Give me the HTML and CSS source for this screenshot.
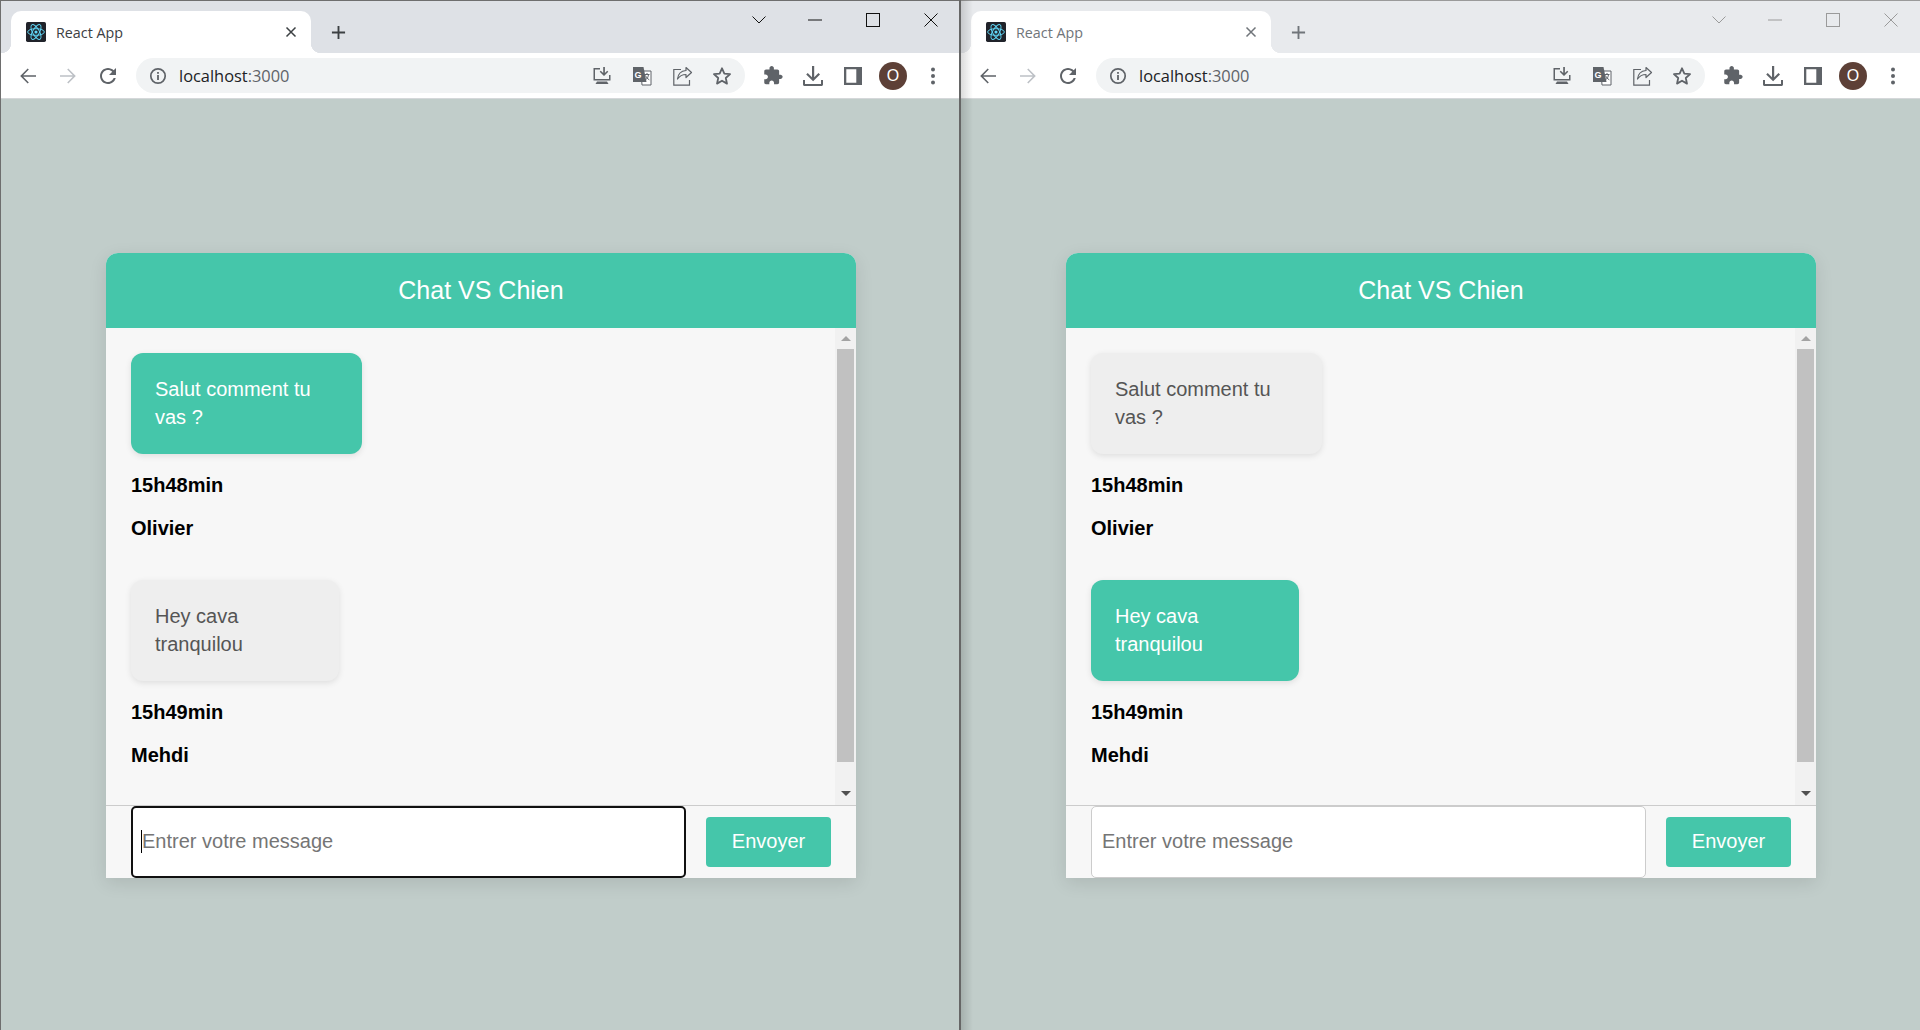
FILE: index.html
```html
<!DOCTYPE html>
<html lang="en">
<head>
    <meta charset="UTF-8">
    <meta name="viewport" content="width=device-width, initial-scale=1.0">
    <title>React App</title>
    <link rel="stylesheet" href="styles.css">
</head>
<body>
    <svg class="icon-defs" xmlns="http://www.w3.org/2000/svg">
        <symbol id="i-react" viewBox="0 0 24 24">
            <rect width="24" height="24" rx="2" fill="#20232a"/>
            <g fill="none" stroke="#61dafb" stroke-width="1.1">
                <ellipse cx="12" cy="12" rx="10" ry="4"/>
                <ellipse cx="12" cy="12" rx="10" ry="4" transform="rotate(60 12 12)"/>
                <ellipse cx="12" cy="12" rx="10" ry="4" transform="rotate(120 12 12)"/>
            </g>
            <circle cx="12" cy="12" r="1.9" fill="#61dafb"/>
        </symbol>
        <symbol id="i-back" viewBox="0 0 24 24">
            <path d="M20 11.2H7.2l5.6-5.6L11.7 4.5 4.2 12l7.5 7.5 1.1-1.1-5.6-5.6H20z"/>
        </symbol>
        <symbol id="i-forward" viewBox="0 0 24 24">
            <path d="M4 11.2h12.8l-5.6-5.6 1.1-1.1 7.5 7.5-7.5 7.5-1.1-1.1 5.6-5.6H4z"/>
        </symbol>
        <symbol id="i-reload" viewBox="0 0 24 24">
            <path d="M17.65 6.35C16.2 4.9 14.21 4 12 4c-4.42 0-7.99 3.58-7.99 8s3.57 8 7.99 8c3.73 0 6.84-2.55 7.73-6h-2.08c-.82 2.33-3.04 4-5.65 4-3.31 0-6-2.69-6-6s2.69-6 6-6c1.66 0 3.14.69 4.22 1.78L13 11h7V4l-2.35 2.35z"/>
        </symbol>
        <symbol id="i-info" viewBox="0 0 24 24">
            <circle cx="12" cy="12" r="7.2" fill="none" stroke="currentColor" stroke-width="1.7"/>
            <rect x="11.1" y="11" width="1.8" height="5"/>
            <rect x="11.1" y="8" width="1.8" height="1.8"/>
        </symbol>
        <symbol id="i-install" viewBox="0 0 24 24">
            <path d="M3.5 4H10v1.5H5v9.5h14V11h1.5v5.5h-17z"/>
            <path d="M13.2 3h1.7v6l2.3-2.3 1.1 1.1L14 12 9.7 7.8l1.1-1.1 2.4 2.3z"/>
            <path d="M7 17.5h10l1.5 2.5H5.5z"/>
        </symbol>
        <symbol id="i-translate" viewBox="0 0 24 24">
            <path d="M11 7h10v14h-9z" fill="#fff" stroke="currentColor" stroke-width="1"/>
            <path d="M3 3h10.500l3 15H3z"/>
            <text x="4.500" y="14" class="translate-g">G</text>
            <path d="M14.500 10.500h5M17 9v1.500M15.500 16c1.800-1.300 2.700-3 3-5.500M15.500 11.500c.8 1.800 2 3.300 3.800 4.300" fill="none" stroke="currentColor" stroke-width="1"/>
        </symbol>
        <symbol id="i-share" viewBox="0 0 24 24">
            <path d="M11 5.500H3.800v15.700h15.700V16" fill="none" stroke="currentColor" stroke-width="1.200"/>
            <path d="M16 3.500l5.500 5-5.500 5v-3c-4 0-6.500 1.500-8.500 4.500.5-5 3.500-8 8.500-8.500z" fill="none" stroke="currentColor" stroke-width="1.200" stroke-linejoin="round"/>
        </symbol>
        <symbol id="i-star" viewBox="0 0 24 24">
            <path d="M12 4.300l2.350 5.250 5.700.6-4.270 3.850 1.200 5.620L12 16.750 7.020 19.620l1.200-5.620L3.950 10.150l5.700-.6z" fill="none" stroke="currentColor" stroke-width="1.800" stroke-linejoin="round"/>
        </symbol>
        <symbol id="i-extension" viewBox="0 0 24 24">
            <path d="M20.500 11H19V7c0-1.100-.9-2-2-2h-4V3.500C13 2.120 11.880 1 10.500 1S8 2.120 8 3.500V5H4c-1.100 0-1.990.9-1.990 2v3.800H3.500c1.490 0 2.700 1.210 2.700 2.700s-1.210 2.700-2.700 2.700H2V20c0 1.100.9 2 2 2h3.800v-1.500c0-1.490 1.210-2.700 2.700-2.700 1.490 0 2.700 1.210 2.700 2.700V22H17c1.100 0 2-.9 2-2v-4h1.500c1.380 0 2.500-1.120 2.500-2.500S21.880 11 20.500 11z"/>
        </symbol>
        <symbol id="i-download" viewBox="0 0 24 24">
            <path d="M11 2h2.200v11.200l4.300-4.300 1.500 1.500-6.900 6.900-6.900-6.900 1.500-1.500 4.300 4.300z"/>
            <path d="M2 16h2v4h16v-4h2v4.500c0 .8-.7 1.500-1.500 1.500h-17c-.8 0-1.500-.7-1.500-1.500z"/>
        </symbol>
        <symbol id="i-panel" viewBox="0 0 24 24">
            <path fill-rule="evenodd" d="M3 3h18v18H3zM5.300 5.200v13.600h10V5.200z"/>
        </symbol>
        <symbol id="i-dots" viewBox="0 0 24 24">
            <circle cx="12" cy="5.500" r="2"/>
            <circle cx="12" cy="12" r="2"/>
            <circle cx="12" cy="18.500" r="2"/>
        </symbol>
        <symbol id="i-tab-close" viewBox="0 0 12 12">
            <path d="M1.500 1.500l9 9M10.500 1.500l-9 9" fill="none" stroke="currentColor" stroke-width="1.500"/>
        </symbol>
        <symbol id="i-plus" viewBox="0 0 16 16">
            <path d="M8 1v14M1 8h14" fill="none" stroke="currentColor" stroke-width="2"/>
        </symbol>
        <symbol id="i-chevron" viewBox="0 0 14 8">
            <path d="M.5 .5L7 7l6.500-6.500" fill="none" stroke="currentColor" stroke-width="1"/>
        </symbol>
        <symbol id="i-min" viewBox="0 0 14 14">
            <path d="M0 7h14" fill="none" stroke="currentColor" stroke-width="1"/>
        </symbol>
        <symbol id="i-max" viewBox="0 0 14 14">
            <rect x=".5" y=".5" width="13" height="13" fill="none" stroke="currentColor" stroke-width="1"/>
        </symbol>
        <symbol id="i-win-close" viewBox="0 0 14 14">
            <path d="M.5 .5l13 13M13.500 .5l-13 13" fill="none" stroke="currentColor" stroke-width="1"/>
        </symbol>
    </svg>

    <div class="desktop">
        <!-- Olivier's window, focused -->
        <div class="window">
            <div class="tabstrip">
                <div class="tab">
                    <svg class="favicon"><use href="#i-react"/></svg>
                    <span class="tab-title">React App</span>
                    <svg class="tab-close"><use href="#i-tab-close"/></svg>
                </div>
                <svg class="new-tab"><use href="#i-plus"/></svg>
                <div class="win-controls">
                    <svg class="win-chevron"><use href="#i-chevron"/></svg>
                    <svg class="win-icon"><use href="#i-min"/></svg>
                    <svg class="win-icon"><use href="#i-max"/></svg>
                    <svg class="win-icon"><use href="#i-win-close"/></svg>
                </div>
            </div>
            <div class="toolbar">
                <svg class="tool"><use href="#i-back"/></svg>
                <svg class="tool tool-off"><use href="#i-forward"/></svg>
                <svg class="tool"><use href="#i-reload"/></svg>
                <div class="omnibox">
                    <svg class="omni-info"><use href="#i-info"/></svg>
                    <span class="url">localhost<span class="url-port">:3000</span></span>
                    <svg class="tool"><use href="#i-install"/></svg>
                    <svg class="tool"><use href="#i-translate"/></svg>
                    <svg class="tool"><use href="#i-share"/></svg>
                    <svg class="tool"><use href="#i-star"/></svg>
                </div>
                <svg class="tool tool-ext"><use href="#i-extension"/></svg>
                <svg class="tool"><use href="#i-download"/></svg>
                <svg class="tool"><use href="#i-panel"/></svg>
                <div class="avatar-slot"><span class="avatar">O</span></div>
                <svg class="tool"><use href="#i-dots"/></svg>
            </div>
            <main class="page">
                <section class="chat">
                    <header class="chat-header">Chat VS Chien</header>
                    <div class="chat-body">
                        <div class="messages">
                            <div class="message">
                                <div class="bubble bubble-own bubble-salut">Salut comment tu vas ?</div>
                                <p class="meta">15h48min</p>
                                <p class="meta">Olivier</p>
                            </div>
                            <div class="message">
                                <div class="bubble bubble-hey">Hey cava tranquilou</div>
                                <p class="meta">15h49min</p>
                                <p class="meta">Mehdi</p>
                            </div>
                        </div>
                        <div class="scrollbar">
                            <span class="arrow-up"></span>
                            <span class="thumb"></span>
                            <span class="arrow-down"></span>
                        </div>
                    </div>
                    <form class="chat-form">
                        <div class="field">
                            <input class="chat-input chat-input-focus" type="text" placeholder="Entrer votre message">
                            <span class="caret"></span>
                        </div>
                        <button class="send" type="button">Envoyer</button>
                    </form>
                </section>
            </main>
        </div>

        <!-- Mehdi's window, in the background -->
        <div class="window window-inactive">
            <div class="tabstrip">
                <div class="tab">
                    <svg class="favicon"><use href="#i-react"/></svg>
                    <span class="tab-title">React App</span>
                    <svg class="tab-close"><use href="#i-tab-close"/></svg>
                </div>
                <svg class="new-tab"><use href="#i-plus"/></svg>
                <div class="win-controls">
                    <svg class="win-chevron"><use href="#i-chevron"/></svg>
                    <svg class="win-icon"><use href="#i-min"/></svg>
                    <svg class="win-icon"><use href="#i-max"/></svg>
                    <svg class="win-icon"><use href="#i-win-close"/></svg>
                </div>
            </div>
            <div class="toolbar">
                <svg class="tool"><use href="#i-back"/></svg>
                <svg class="tool tool-off"><use href="#i-forward"/></svg>
                <svg class="tool"><use href="#i-reload"/></svg>
                <div class="omnibox">
                    <svg class="omni-info"><use href="#i-info"/></svg>
                    <span class="url">localhost<span class="url-port">:3000</span></span>
                    <svg class="tool"><use href="#i-install"/></svg>
                    <svg class="tool"><use href="#i-translate"/></svg>
                    <svg class="tool"><use href="#i-share"/></svg>
                    <svg class="tool"><use href="#i-star"/></svg>
                </div>
                <svg class="tool tool-ext"><use href="#i-extension"/></svg>
                <svg class="tool"><use href="#i-download"/></svg>
                <svg class="tool"><use href="#i-panel"/></svg>
                <div class="avatar-slot"><span class="avatar">O</span></div>
                <svg class="tool"><use href="#i-dots"/></svg>
            </div>
            <main class="page">
                <section class="chat">
                    <header class="chat-header">Chat VS Chien</header>
                    <div class="chat-body">
                        <div class="messages">
                            <div class="message">
                                <div class="bubble bubble-salut">Salut comment tu vas ?</div>
                                <p class="meta">15h48min</p>
                                <p class="meta">Olivier</p>
                            </div>
                            <div class="message">
                                <div class="bubble bubble-own bubble-hey">Hey cava tranquilou</div>
                                <p class="meta">15h49min</p>
                                <p class="meta">Mehdi</p>
                            </div>
                        </div>
                        <div class="scrollbar">
                            <span class="arrow-up"></span>
                            <span class="thumb"></span>
                            <span class="arrow-down"></span>
                        </div>
                    </div>
                    <form class="chat-form">
                        <div class="field">
                            <input class="chat-input" type="text" placeholder="Entrer votre message">
                        </div>
                        <button class="send" type="button">Envoyer</button>
                    </form>
                </section>
            </main>
        </div>
    </div>
</body>
</html>
```

FILE: styles.css
```css
* {
    margin: 0;
    padding: 0;
    box-sizing: border-box;
}

html, body {
    height: 100%;
    overflow: hidden;
}

body {
    font-family: "Liberation Sans", Arial, sans-serif;
    background-color: #c1cdca;
}

.icon-defs {
    display: none;
}

.translate-g {
    font-family: "Liberation Sans", Arial, sans-serif;
    font-size: 9px;
    font-weight: bold;
    fill: #fff;
}

.desktop {
    display: flex;
    height: 100vh;
}

.window {
    position: relative;
    width: 959px;
    flex-shrink: 0;
    display: flex;
    flex-direction: column;
    border-left: 1px solid #6e6e6e;
}

.window-inactive {
    width: 961px;
    border-left: 2px solid #666;
}

/* Shadow the front window throws on this one */
.window-inactive::after {
    content: "";
    position: absolute;
    top: 0;
    bottom: 0;
    left: 0;
    width: 12px;
    background: linear-gradient(to right, rgba(0, 0, 0, 0.14), rgba(0, 0, 0, 0));
}

/* Tab strip */
.tabstrip {
    height: 53px;
    flex-shrink: 0;
    display: flex;
    align-items: flex-end;
    padding-left: 10px;
    background-color: #dee1e6;
    border-top: 1px solid #6e6e6e;
    color: #3c4043;
}

.window-inactive .tabstrip {
    background-color: #e8eaed;
    border-top-color: #9a9a9a;
    color: #70757a;
}

.tab {
    position: relative;
    width: 300px;
    height: 42px;
    display: flex;
    align-items: center;
    padding: 0 14px 0 15px;
    background-color: #fff;
    border-radius: 10px 10px 0 0;
}

.tab::before, .tab::after {
    content: "";
    position: absolute;
    bottom: 0;
    width: 10px;
    height: 10px;
}

.tab::before {
    left: -10px;
    background: radial-gradient(circle at 0 0, transparent 10px, #fff 10.5px);
}

.tab::after {
    right: -10px;
    background: radial-gradient(circle at 100% 0, transparent 10px, #fff 10.5px);
}

.favicon {
    width: 20px;
    height: 20px;
    margin-right: 10px;
}

.tab-title {
    flex: 1;
    font-family: "Open Sans", sans-serif;
    font-size: 14.3px;
    white-space: nowrap;
}

.tab-close {
    width: 12px;
    height: 12px;
}

.new-tab {
    width: 15px;
    height: 15px;
    margin: 0 0 13px 20px;
}

.win-controls {
    margin-left: auto;
    align-self: flex-start;
    display: flex;
    align-items: center;
    height: 38px;
    padding-right: 21px;
    color: #111;
}

.window-inactive .win-controls {
    padding-right: 22px;
    color: #9a9a9a;
}

.win-chevron {
    width: 14px;
    height: 8px;
    margin-right: 42px;
}

.win-icon {
    width: 14px;
    height: 14px;
    margin-left: 44px;
}

.win-chevron + .win-icon {
    margin-left: 0;
}

/* Toolbar */
.toolbar {
    height: 46px;
    flex-shrink: 0;
    display: flex;
    align-items: center;
    padding-left: 7px;
    background-color: #fff;
    border-bottom: 1px solid #d5d8da;
}

.tool {
    width: 40px;
    height: 24px;
    flex-shrink: 0;
    fill: #5f6368;
    color: #5f6368;
}

.tool-off {
    fill: #bdc1c6;
}

.tool-ext {
    height: 21px;
    margin-left: 8px;
}

.omnibox {
    width: 609px;
    height: 35px;
    margin-left: 8px;
    display: flex;
    align-items: center;
    padding: 0 3px 0 10px;
    background-color: #f1f3f4;
    border-radius: 18px;
}

.omni-info {
    width: 24px;
    height: 24px;
    margin-right: 9px;
    fill: #5f6368;
    color: #5f6368;
}

.url {
    flex: 1;
    font-family: "Open Sans", sans-serif;
    font-size: 16.4px;
    color: #202124;
}

.url-port {
    color: #5f6368;
}

.avatar-slot {
    width: 40px;
    display: flex;
    justify-content: center;
}

.avatar {
    width: 28px;
    height: 28px;
    display: flex;
    align-items: center;
    justify-content: center;
    border-radius: 50%;
    background-color: #5d4037;
    color: #fff;
    font-family: "Liberation Sans", Arial, sans-serif;
    font-size: 16px;
}

/* Page */
.page {
    flex: 1;
    padding: 154px 0 0 105px;
    background-color: #c1cdca;
}

.chat {
    width: 750px;
    height: 625px;
    display: flex;
    flex-direction: column;
    background-color: #f7f7f7;
    border-radius: 12px 12px 0 0;
    box-shadow: 0 5px 18px rgba(0, 0, 0, 0.1);
}

.chat-header {
    height: 75px;
    flex-shrink: 0;
    display: flex;
    align-items: center;
    justify-content: center;
    background-color: #45c6aa;
    border-radius: 12px 12px 0 0;
    color: #fff;
    font-size: 25px;
}

.chat-body {
    flex: 1;
    min-height: 0;
    display: flex;
}

.messages {
    flex: 1;
    padding: 25px 0 0 25px;
    overflow: hidden;
}

.message {
    margin-bottom: 40px;
}

.bubble {
    height: 101px;
    padding: 21.5px 24px;
    margin-bottom: 20px;
    background-color: #eee;
    border-radius: 12px;
    box-shadow: 0 2px 6px rgba(0, 0, 0, 0.1);
    color: #555;
    font-size: 20px;
    line-height: 28px;
}

.bubble-own {
    background-color: #45c6aa;
    color: #fff;
}

.bubble-salut {
    width: 231px;
}

.bubble-hey {
    width: 208px;
}

.meta {
    margin-bottom: 20px;
    color: #000;
    font-size: 20px;
    font-weight: bold;
    line-height: 23px;
}

.meta:last-child {
    margin-bottom: 0;
}

/* Fake classic scrollbar */
.scrollbar {
    width: 21px;
    flex-shrink: 0;
    display: flex;
    flex-direction: column;
    align-items: center;
    background-color: #f1f1f1;
}

.arrow-up, .arrow-down {
    width: 0;
    height: 0;
    border-left: 5px solid transparent;
    border-right: 5px solid transparent;
}

.arrow-up {
    margin-top: 8px;
    border-bottom: 5px solid #a3a3a3;
}

.thumb {
    width: 17px;
    height: 413px;
    margin-top: 8px;
    background-color: #c1c1c1;
}

.arrow-down {
    margin-top: 29px;
    border-top: 5px solid #505050;
}

/* Form */
.chat-form {
    height: 73px;
    flex-shrink: 0;
    display: flex;
    align-items: center;
    gap: 20px;
    padding: 0 25px;
    border-top: 1px solid #ccc;
}

.field {
    position: relative;
    width: 555px;
    height: 72px;
}

.chat-input {
    width: 100%;
    height: 100%;
    padding: 0 10px 2px;
    background-color: #fff;
    border: 1px solid #ccc;
    border-radius: 5px;
    outline: none;
    font-family: "Liberation Sans", Arial, sans-serif;
    font-size: 20px;
}

.chat-input::placeholder {
    color: #757575;
}

.chat-input-focus {
    border: 2px solid #111;
    padding: 0 9px 2px;
}

.caret {
    position: absolute;
    left: 10px;
    top: 24px;
    width: 1px;
    height: 23px;
    background-color: #000;
}

.send {
    width: 125px;
    height: 50px;
    padding-bottom: 2px;
    background-color: #45c6aa;
    border: none;
    border-radius: 4px;
    color: #fff;
    font-family: "Liberation Sans", Arial, sans-serif;
    font-size: 20px;
}
```
